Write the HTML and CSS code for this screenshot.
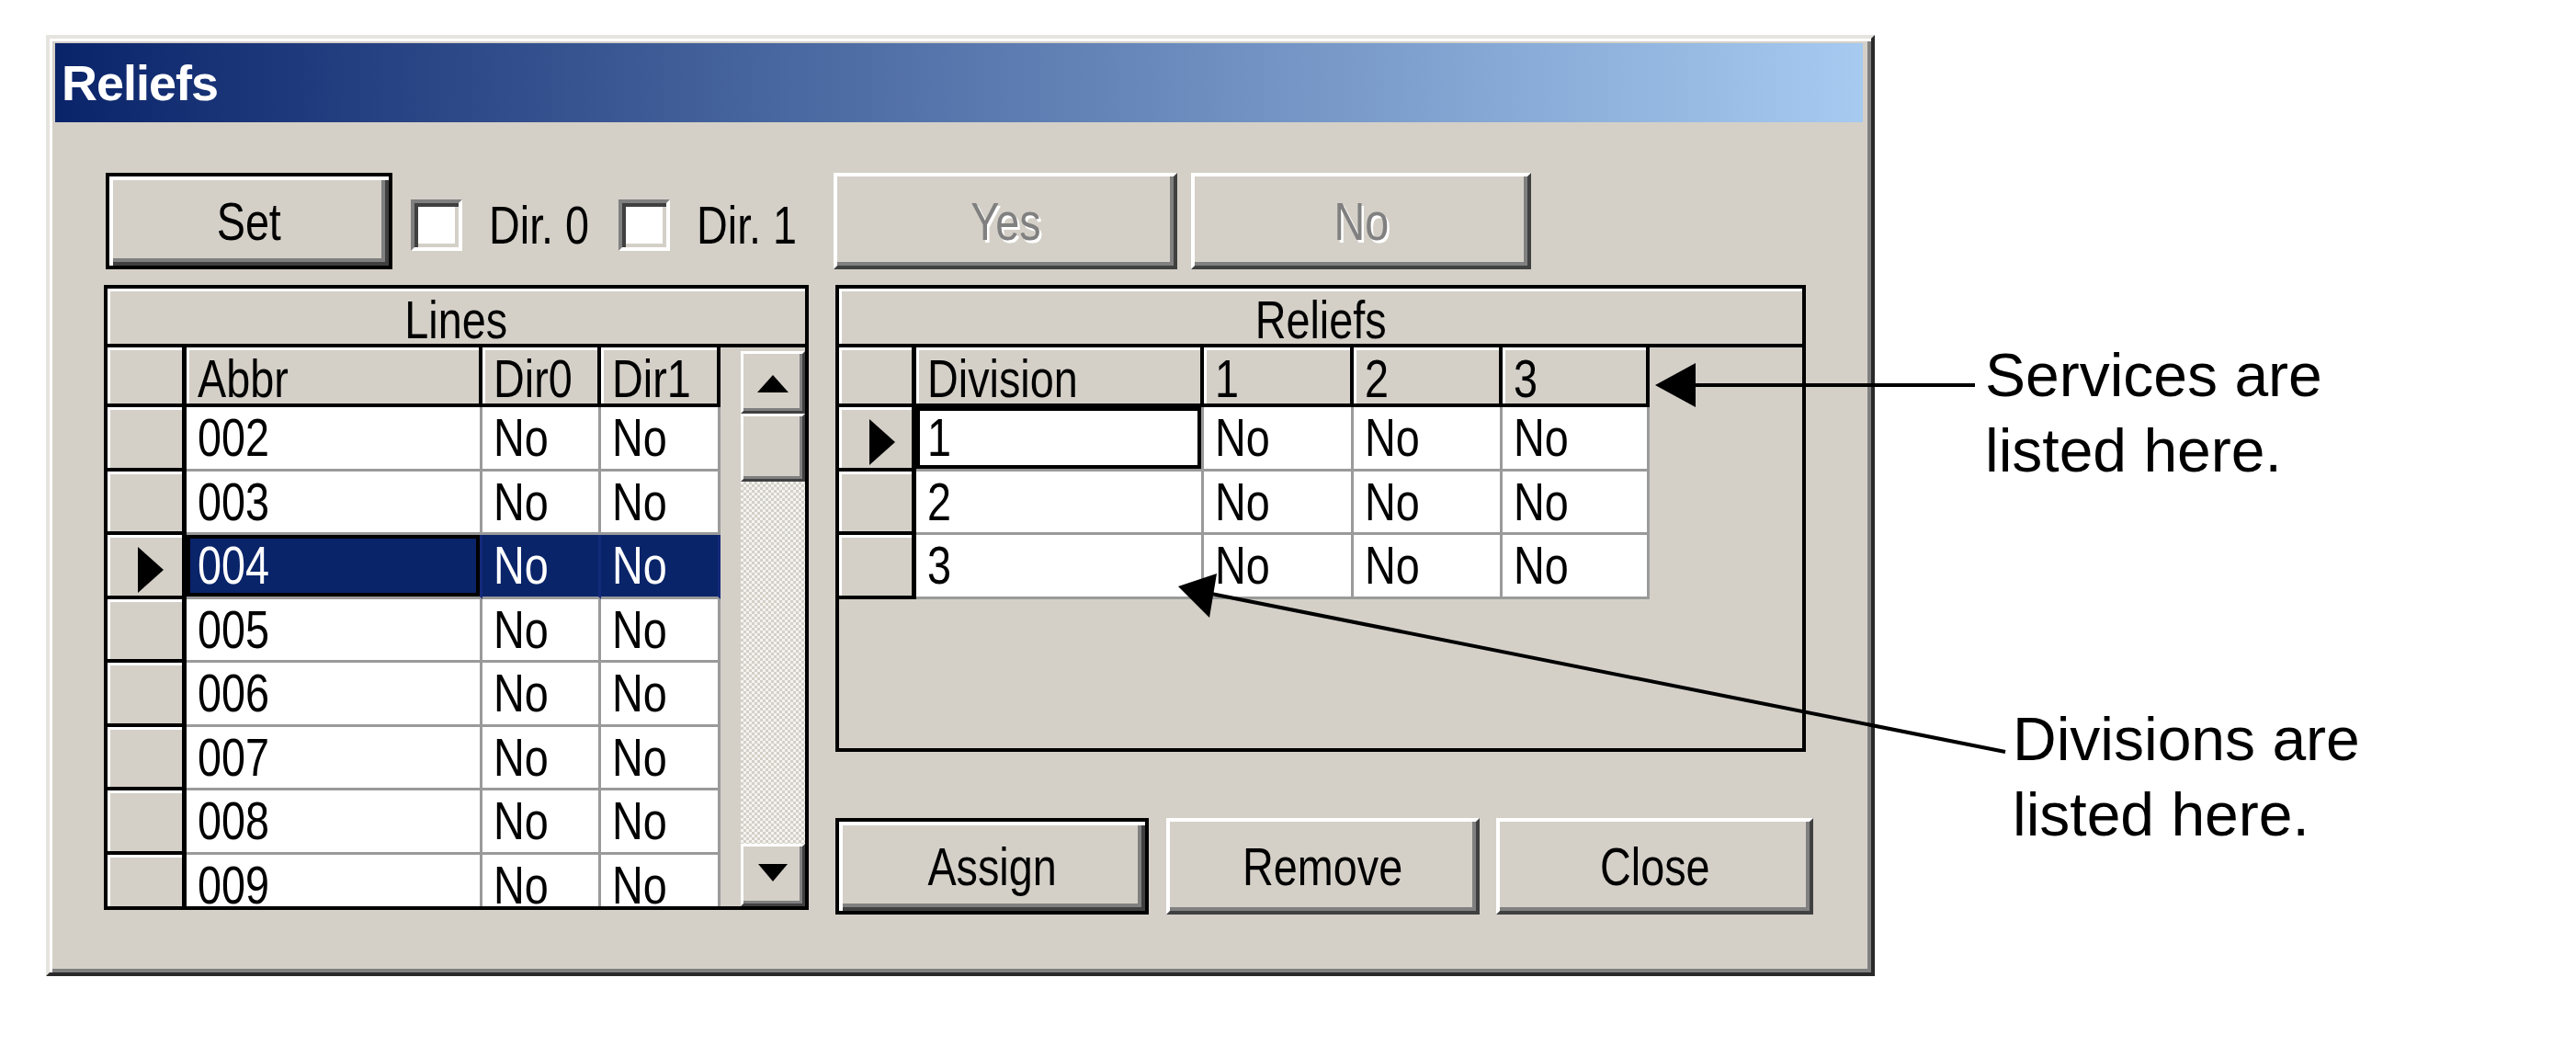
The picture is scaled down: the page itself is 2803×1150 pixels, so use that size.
FILE: index.html
```html
<!DOCTYPE html>
<html>
<head>
<meta charset="utf-8">
<title>Reliefs</title>
<link rel="stylesheet" href="styles.css">
</head>
<body>
<div class="page">
  <div class="window">
    <div class="titlebar"><span class="title">Reliefs</span></div>
    <div class="content">
      <div class="toprow">
        <div class="btn default set"><span class="t">Set</span></div>
        <div class="cbgroup g1"><span class="cb"></span><span class="t">Dir. 0</span></div>
        <div class="cbgroup g2"><span class="cb"></span><span class="t">Dir. 1</span></div>
        <div class="btn disabled yes"><span class="t">Yes</span></div>
        <div class="btn disabled no"><span class="t">No</span></div>
      </div>
      <div class="main">
        <div class="grid lines">
          <div class="caption"><span class="t">Lines</span></div>
          <div class="gbody">
            <div class="table lt">
              <div class="c i"></div><div class="c h"><span class="t">Abbr</span></div><div class="c h"><span class="t">Dir0</span></div><div class="c h"><span class="t">Dir1</span></div>
              <div class="c i"></div><div class="c d"><span class="t">002</span></div><div class="c d"><span class="t">No</span></div><div class="c d"><span class="t">No</span></div>
              <div class="c i"></div><div class="c d"><span class="t">003</span></div><div class="c d"><span class="t">No</span></div><div class="c d"><span class="t">No</span></div>
              <div class="c i"><span class="tri"></span></div><div class="c d sel focus"><span class="t">004</span></div><div class="c d sel"><span class="t">No</span></div><div class="c d sel"><span class="t">No</span></div>
              <div class="c i"></div><div class="c d"><span class="t">005</span></div><div class="c d"><span class="t">No</span></div><div class="c d"><span class="t">No</span></div>
              <div class="c i"></div><div class="c d"><span class="t">006</span></div><div class="c d"><span class="t">No</span></div><div class="c d"><span class="t">No</span></div>
              <div class="c i"></div><div class="c d"><span class="t">007</span></div><div class="c d"><span class="t">No</span></div><div class="c d"><span class="t">No</span></div>
              <div class="c i"></div><div class="c d"><span class="t">008</span></div><div class="c d"><span class="t">No</span></div><div class="c d"><span class="t">No</span></div>
              <div class="c i"></div><div class="c d"><span class="t">009</span></div><div class="c d"><span class="t">No</span></div><div class="c d"><span class="t">No</span></div>
            </div>
            <div class="sbgap"></div>
            <div class="vscroll">
              <div class="sb up"></div>
              <div class="sb thumb"></div>
              <div class="track"></div>
              <div class="sb down"></div>
            </div>
          </div>
        </div>
        <div class="rightcol">
          <div class="grid reliefs">
            <div class="caption"><span class="t">Reliefs</span></div>
            <div class="gbody">
              <div class="table rt">
                <div class="c i"></div><div class="c h"><span class="t">Division</span></div><div class="c h"><span class="t">1</span></div><div class="c h"><span class="t">2</span></div><div class="c h"><span class="t">3</span></div>
                <div class="c i"><span class="tri"></span></div><div class="c d focus"><span class="t">1</span></div><div class="c d"><span class="t">No</span></div><div class="c d"><span class="t">No</span></div><div class="c d"><span class="t">No</span></div>
                <div class="c i"></div><div class="c d"><span class="t">2</span></div><div class="c d"><span class="t">No</span></div><div class="c d"><span class="t">No</span></div><div class="c d"><span class="t">No</span></div>
                <div class="c i"></div><div class="c d"><span class="t">3</span></div><div class="c d"><span class="t">No</span></div><div class="c d"><span class="t">No</span></div><div class="c d"><span class="t">No</span></div>
              </div>
            </div>
          </div>
          <div class="btnrow">
            <div class="btn default assign"><span class="t">Assign</span></div>
            <div class="btn remove"><span class="t">Remove</span></div>
            <div class="btn close"><span class="t">Close</span></div>
          </div>
        </div>
      </div>
    </div>
  </div>
  <div class="notes">
    <div class="note note1">Services are<br>listed here.</div>
    <div class="note note2">Divisions are<br>listed here.</div>
  </div>
</div>
<svg class="overlay" width="2803" height="1150" viewBox="0 0 2803 1150">
  <line x1="1840" y1="419" x2="2149" y2="419" stroke="#000" stroke-width="4"/>
  <polygon points="1801,419 1845,395 1845,443" fill="#000"/>
  <line x1="1318" y1="646" x2="2182" y2="818" stroke="#000" stroke-width="4"/>
  <polygon points="1282,638 1324,624 1316,672" fill="#000"/>
</svg>
</body>
</html>
```

FILE: styles.css
```css
body {
  margin: 0;
  background: #fff;
  width: 2803px;
  height: 1150px;
  position: relative;
  overflow: hidden;
  font-family: "Liberation Sans", Arial, sans-serif;
  color: #000;
}

.page {
  display: flex;
  align-items: flex-start;
  padding: 38px 0 0 50px;
}

.window {
  box-sizing: border-box;
  flex: none;
  width: 1990px;
  height: 1024px;
  background: #d4d0c8;
  border: 4px solid;
  border-color: #e6e4de #2a2a2a #2a2a2a #e6e4de;
  box-shadow: inset 3px 3px 0 #fff, inset -4px -4px 0 #808080;
  padding: 5px 9px 0 6px;
}

.titlebar {
  height: 86px;
  background: linear-gradient(to right, #0a246a 0%, #a6caf0 100%);
  display: flex;
  align-items: center;
  padding-left: 7px;
}

.title {
  color: #fff;
  font-weight: bold;
  font-size: 54px;
  letter-spacing: -1px;
}

.content {
  padding: 55px 0 0 53px;
  font-size: 57px;
}

/* narrow bitmap-like dialog text */
.t {
  display: inline-block;
  white-space: nowrap;
  transform: scaleX(0.82);
  transform-origin: 0 50%;
}

.btn .t, .caption .t {
  transform-origin: 50% 50%;
}

/* top row */
.toprow {
  display: flex;
  height: 105px;
  align-items: center;
}

.btn {
  box-sizing: border-box;
  flex: none;
  height: 105px;
  display: flex;
  align-items: center;
  justify-content: center;
  background: #d4d0c8;
  border: 4px solid;
  border-color: #fff #404040 #404040 #fff;
  box-shadow: inset -4px -4px 0 #808080;
}

.btn.default {
  border-color: #000;
  box-shadow: inset 4px 4px 0 #fff, inset -4px -4px 0 #404040, inset -8px -8px 0 #808080;
}

.btn.disabled {
  color: #808080;
  text-shadow: 3px 3px 0 #fff;
}

.set { width: 312px; margin-left: 2px; }
.yes { width: 374px; }
.no { width: 370px; margin-left: 15px; }

.cbgroup {
  box-sizing: border-box;
  display: flex;
  align-items: center;
  height: 105px;
  padding-top: 9px;
}
.g1 { width: 226px; margin-left: 20px; }
.g2 { width: 234px; }

.cb {
  box-sizing: border-box;
  width: 56px;
  height: 56px;
  flex: none;
  background: #fff;
  border: 4px solid;
  border-color: #808080 #fff #fff #808080;
  box-shadow: inset 4px 4px 0 #404040, inset -4px -4px 0 #d4d0c8;
  margin-right: 29px;
}

/* main area */
.main {
  display: flex;
  align-items: flex-start;
  margin-top: 17px;
}

.grid {
  box-sizing: border-box;
  border: 4px solid #000;
  background: #d4d0c8;
  display: flex;
  flex-direction: column;
  flex: none;
}

.lines { width: 767px; height: 680px; }
.reliefs { width: 1056px; height: 508px; }

.caption {
  box-sizing: border-box;
  flex: none;
  height: 64px;
  border-bottom: 4px solid #000;
  box-shadow: inset 3px 3px 0 #fff;
  display: flex;
  align-items: center;
  justify-content: center;
  padding-top: 8px;
}

.gbody {
  flex: 1;
  display: flex;
  min-height: 0;
}

.table {
  display: grid;
  overflow: hidden;
  align-content: start;
  grid-template-rows: 65px;
  grid-auto-rows: 69.5px;
}

.lt {
  width: 667px;
  grid-template-columns: 86px 322px 129px 130px;
}

.rt {
  grid-template-columns: 84px 313px 163px 162px 160px;
}

.c {
  box-sizing: border-box;
  padding-left: 12px;
  white-space: nowrap;
  overflow: hidden;
  display: flex;
  align-items: center;
}

.h {
  background: #d4d0c8;
  border-right: 4px solid #000;
  border-bottom: 4px solid #000;
  box-shadow: inset 3px 3px 0 #fff;
  padding-top: 6px;
}

.i {
  background: #d4d0c8;
  border-right: 5px solid #000;
  border-bottom: 4px solid #000;
  box-shadow: inset 3px 3px 0 #fff;
  padding-left: 33px;
}

.d {
  background: #fff;
  border-right: 3px solid #9a9a9a;
  border-bottom: 3px solid #9a9a9a;
}

.sel {
  background: #0a246a;
  color: #fff;
  border-right-color: #13297a;
}

.focus {
  box-shadow: inset 0 0 0 4px #000;
}

.tri {
  width: 0;
  height: 0;
  border-left: 28px solid #000;
  border-top: 25px solid transparent;
  border-bottom: 25px solid transparent;
  margin-top: 10px;
}

/* scrollbar */
.sbgap { width: 22px; flex: none; }

.vscroll {
  box-sizing: border-box;
  width: 70px;
  flex: none;
  display: flex;
  flex-direction: column;
  padding-top: 4px;
}

.sb {
  box-sizing: border-box;
  flex: none;
  background: #d4d0c8;
  border: 3px solid;
  border-color: #fff #404040 #404040 #fff;
  box-shadow: inset -3px -3px 0 #808080;
  display: flex;
  align-items: center;
  justify-content: center;
}

.up, .down { height: 68px; }
.thumb { height: 74px; }

.up::after {
  content: "";
  border-left: 17px solid transparent;
  border-right: 17px solid transparent;
  border-bottom: 19px solid #000;
  margin-top: 2px;
}

.down::after {
  content: "";
  border-left: 16px solid transparent;
  border-right: 16px solid transparent;
  border-top: 19px solid #000;
  margin-top: -6px;
}

.track {
  flex: 1;
  background-color: #fff;
  background-image: repeating-conic-gradient(#d4d0c8 0% 25%, #f4f3f0 0% 50%);
  background-size: 6px 6px;
}

/* right column */
.rightcol {
  margin-left: 29px;
  width: 1064px;
  display: flex;
  flex-direction: column;
}

.btnrow {
  display: flex;
  margin-top: 72px;
}

.assign { width: 341px; }
.remove { width: 341px; margin-left: 19px; }
.close { width: 345px; margin-left: 18px; }

/* annotations */
.notes {
  margin-left: 120px;
  padding-top: 329px;
  font-size: 66px;
  line-height: 82px;
  white-space: nowrap;
}

.note2 {
  margin-left: 30px;
  margin-top: 232px;
}

.overlay {
  position: absolute;
  left: 0;
  top: 0;
  pointer-events: none;
}
```
